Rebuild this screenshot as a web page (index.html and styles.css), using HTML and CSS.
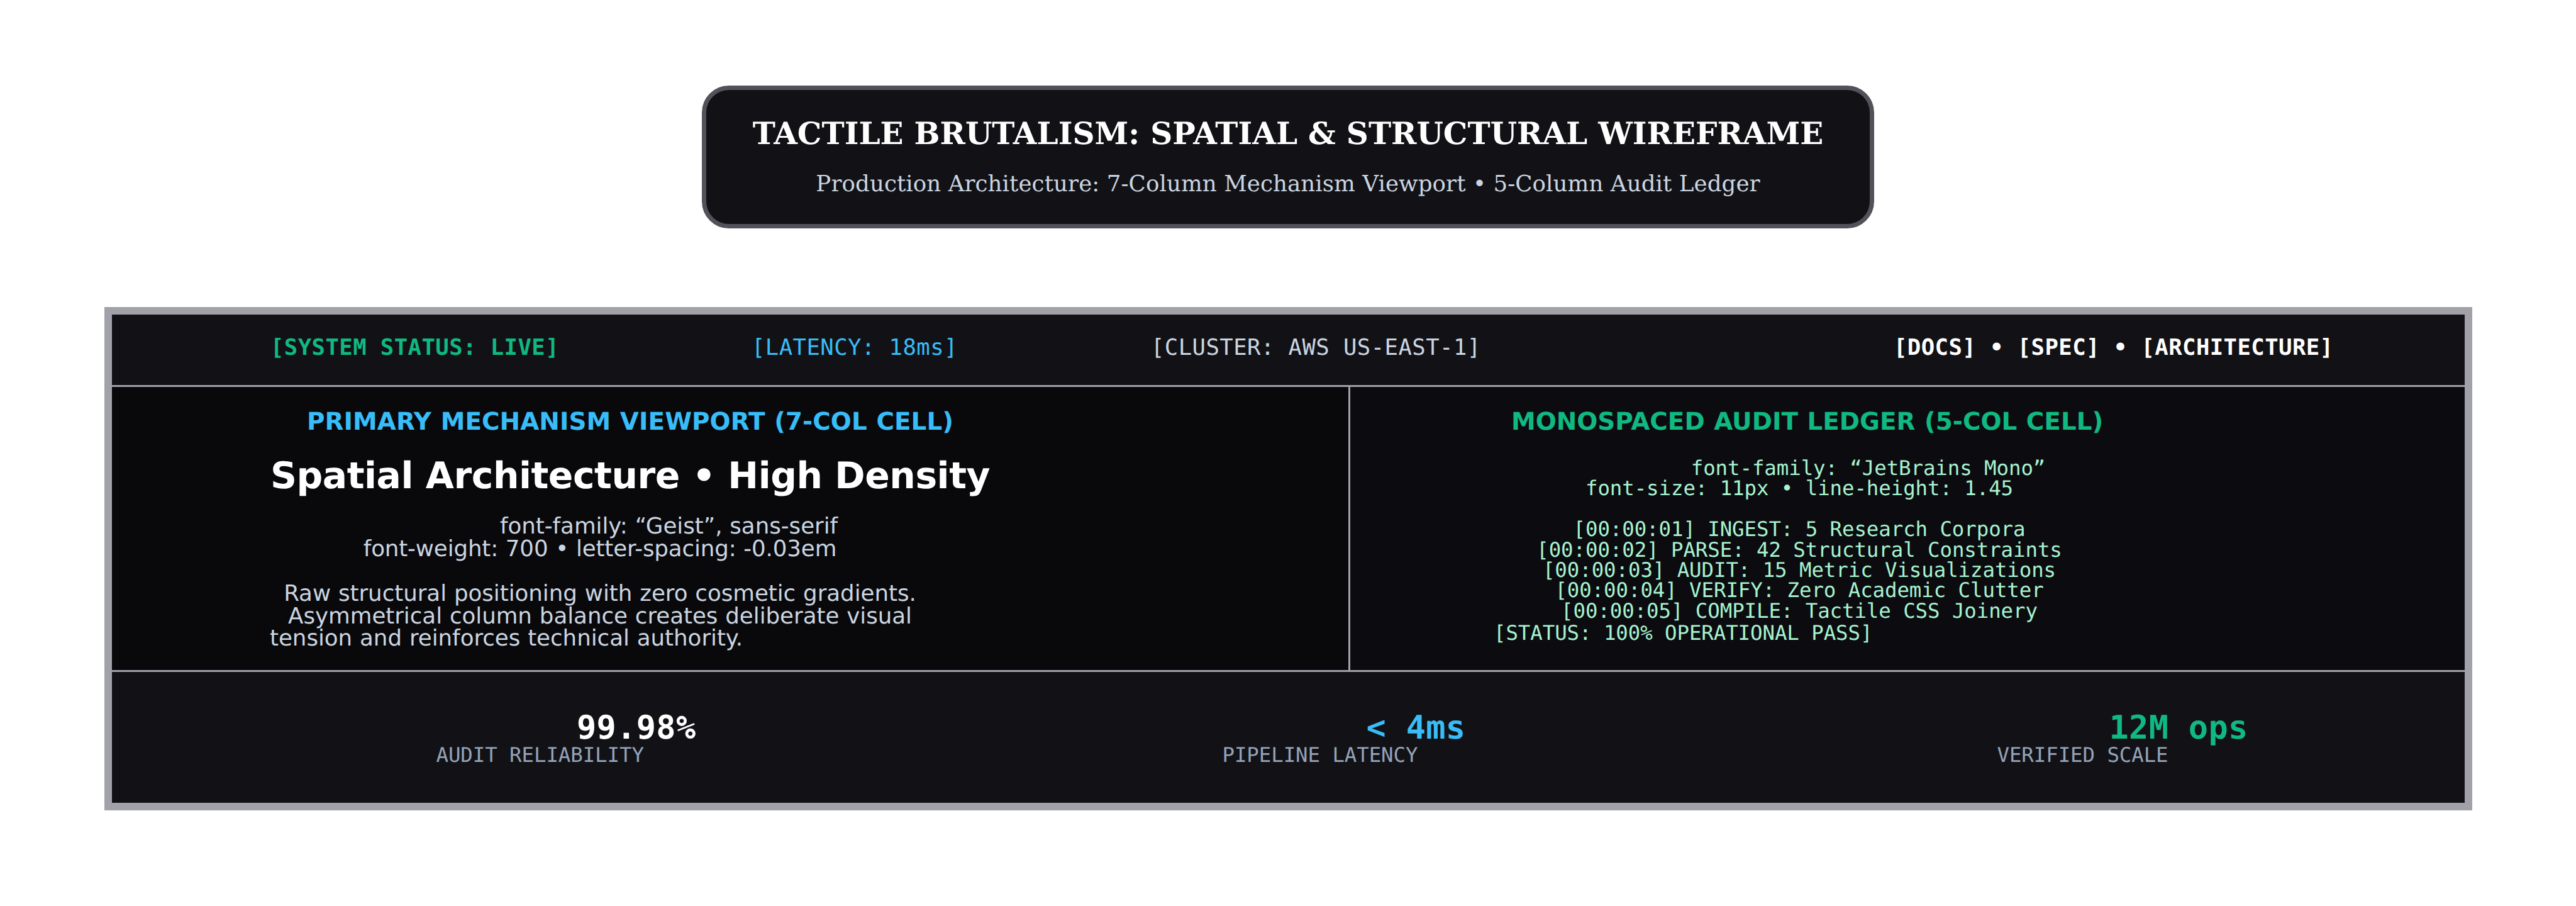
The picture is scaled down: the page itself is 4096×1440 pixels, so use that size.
FILE: index.html
```html
<!DOCTYPE html>
<html lang="en">
<head>
    <meta charset="UTF-8">
    <meta name="viewport" content="width=device-width, initial-scale=1.0">
    <title>Tactile Brutalism Wireframe</title>
    <link rel="stylesheet" href="styles.css">
</head>
<body>
    <header class="banner">
        <h1>TACTILE BRUTALISM: SPATIAL &amp; STRUCTURAL WIREFRAME</h1>
        <p>Production Architecture: 7-Column Mechanism Viewport • 5-Column Audit Ledger</p>
    </header>

    <main class="frame">
        <div class="status-bar">
            <span class="live">[SYSTEM STATUS: LIVE]</span>
            <span class="latency">[LATENCY: 18ms]</span>
            <span class="cluster">[CLUSTER: AWS US-EAST-1]</span>
            <span class="links">[DOCS] • [SPEC] • [ARCHITECTURE]</span>
        </div>

        <section class="viewport">
            <h2>PRIMARY MECHANISM VIEWPORT (7-COL CELL)</h2>
            <h3>Spatial Architecture • High Density</h3>
            <div class="description">
                <div class="first">font-family: “Geist”, sans-serif</div>
                <div class="weight">font-weight: 700 • letter-spacing: -0.03em</div>
                <br>
                <div>Raw structural positioning with zero cosmetic gradients.</div>
                <div>Asymmetrical column balance creates deliberate visual</div>
                <div class="last">tension and reinforces technical authority.</div>
            </div>
        </section>

        <section class="ledger">
            <h2>MONOSPACED AUDIT LEDGER (5-COL CELL)</h2>
            <div class="log">
                <div class="first">font-family: “JetBrains Mono”</div>
                <div>font-size: 11px • line-height: 1.45</div>
                <br>
                <div>[00:00:01] INGEST: 5 Research Corpora</div>
                <div>[00:00:02] PARSE: 42 Structural Constraints</div>
                <div>[00:00:03] AUDIT: 15 Metric Visualizations</div>
                <div>[00:00:04] VERIFY: Zero Academic Clutter</div>
                <div>[00:00:05] COMPILE: Tactile CSS Joinery</div>
                <div class="last">[STATUS: 100% OPERATIONAL PASS]</div>
            </div>
        </section>

        <footer class="stats">
            <div class="stat reliability">
                <div class="value">99.98%</div>
                <div class="label">AUDIT RELIABILITY</div>
            </div>
            <div class="stat pipeline">
                <div class="value">&lt; 4ms</div>
                <div class="label">PIPELINE LATENCY</div>
            </div>
            <div class="stat scale">
                <div class="value">12M ops</div>
                <div class="label">VERIFIED SCALE</div>
            </div>
        </footer>
    </main>
</body>
</html>
```
FILE: styles.css
```css
* {
    box-sizing: border-box;
    margin: 0;
    padding: 0;
}
body {
    width: 4096px;
    height: 1440px;
    padding-top: 136px;
    background-color: #ffffff;
    font-family: "DejaVu Sans", sans-serif;
    text-rendering: geometricPrecision;
    white-space: nowrap;
    overflow: hidden;
}

/* Title banner */
.banner {
    width: 1864px;
    height: 227px;
    margin: 0 auto 125px;
    padding-top: 40px;
    border: 7px solid #52525b;
    border-radius: 43px;
    background-color: #121216;
    font-family: "DejaVu Serif", serif;
    text-align: center;
}
.banner h1 {
    color: #ffffff;
    font-size: 48.6px;
    line-height: 60px;
}
.banner p {
    margin-top: 28px;
    color: #cbd5e1;
    font-size: 35.64px;
    line-height: 44px;
    letter-spacing: 0.07px;
}

/* Grid frame, the gaps show through as rules */
.frame {
    display: grid;
    grid-template-columns: 1966px 1772px;
    grid-template-rows: 112px 450px 208px;
    gap: 3px;
    width: 3765px;
    margin-left: 166px;
    border: 12px solid #a1a1aa;
    background-color: #a1a1aa;
}
.status-bar {
    grid-column: 1 / 3;
    display: grid;
    grid-template-columns: 765px 635px 1181px auto;
    align-items: center;
    padding: 0 0 7px 252px;
    background-color: #121216;
    font-family: "DejaVu Sans Mono", monospace;
    font-size: 35.64px;
    letter-spacing: 0.41px;
}
.live {
    color: #10b981;
    font-weight: bold;
}
.latency {
    color: #38bdf8;
}
.cluster {
    color: #cbd5e1;
}
.links {
    color: #ffffff;
    font-weight: bold;
}

h2 {
    font-size: 38.88px;
    line-height: 50px;
    word-spacing: 1px;
}
.first {
    padding-left: 219px;
}
.last {
    text-align: left;
}

.viewport {
    padding: 31px 0 0 252px;
    background-color: #09090b;
}
.viewport h2 {
    margin-left: 58px;
    color: #38bdf8;
    letter-spacing: 0.06px;
}
.viewport h3 {
    margin-top: 25px;
    color: #ffffff;
    font-size: 58.31px;
    line-height: 70px;
    letter-spacing: -0.46px;
}
.description {
    width: 1050px;
    margin: 28px 0 0 -1px;
    color: #cbd5e1;
    font-size: 35.64px;
    line-height: 35.64px;
    letter-spacing: -0.02px;
    word-spacing: 0.6px;
    text-align: center;
}
.description .weight {
    letter-spacing: -0.13px;
}

.ledger {
    padding: 31px 0 0 228px;
    background-color: #0c0c10;
}
.ledger h2 {
    margin-left: 28px;
    color: #10b981;
}
.log {
    width: 972px;
    margin-top: 32px;
    color: #a7f3d0;
    font-family: "DejaVu Sans Mono", monospace;
    font-size: 32.4px;
    line-height: 32.4px;
    letter-spacing: -0.07px;
    text-align: center;
}
.log .last {
    margin-top: 3px;
}

/* Bottom metrics */
.stats {
    grid-column: 1 / 3;
    display: grid;
    grid-template-columns: 1250px 1232px auto;
    padding: 62.9px 0 0 515.5px;
    background-color: #121216;
    font-family: "DejaVu Sans Mono", monospace;
}
.value {
    font-size: 51.84px;
    font-weight: bold;
    line-height: 52px;
    letter-spacing: 0.38px;
}
.label {
    color: #94a3b8;
    font-size: 32.4px;
    line-height: 34.6px;
    letter-spacing: -0.07px;
}
.reliability .value {
    margin-left: 223.5px;
    color: #ffffff;
}
.pipeline .value {
    margin-left: 229px;
    color: #38bdf8;
}
.scale .value {
    margin-left: 178px;
    color: #10b981;
}
```
